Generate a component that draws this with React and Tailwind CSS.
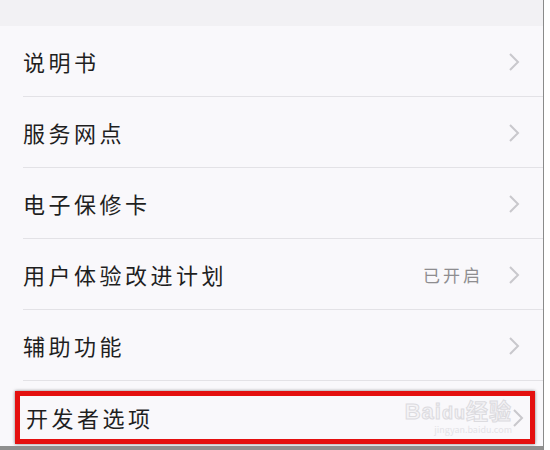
import React from "react";

const font = {
  fontFamily: '"Noto Sans CJK SC", "Noto Sans", sans-serif',
};

function Chevron() {
  return (
    <svg width="12" height="20" viewBox="0 0 12 20" className="shrink-0">
      <polyline
        points="2,2 10,10 2,18"
        fill="none"
        stroke="#c9c8cc"
        strokeWidth="2"
      />
    </svg>
  );
}

function Row({ label, value, last }) {
  return (
    <div className="relative h-[71px] flex items-center pl-[23px] pr-[23px]">
      <span className="text-[22px] text-[#1f1f1f] tracking-[3.5px]">{label}</span>
      <div className="ml-auto flex items-center gap-[25px]">
        {value && (
          <span className="text-[17px] text-[#8e8d90] tracking-[3px]">
            {value}
          </span>
        )}
        <Chevron />
      </div>
      {!last && (
        <div className="absolute bottom-0 left-[23px] right-0 h-px bg-[#e3e2e6]" />
      )}
    </div>
  );
}

export default function App() {
  const rows = [
    { label: "说明书" },
    { label: "服务网点" },
    { label: "电子保修卡" },
    { label: "用户体验改进计划", value: "已开启" },
    { label: "辅助功能" },
  ];

  return (
    <div className="w-[550px] h-[450px] flex bg-white overflow-hidden" style={font}>
      <div className="w-[544px] flex flex-col bg-[#f9f8fb] border-r border-[#8a8a8a]">
        <div className="h-[26px] bg-[#f2f1f4] shrink-0" />
        {rows.map((r) => (
          <Row key={r.label} label={r.label} value={r.value} />
        ))}
        <div className="relative flex-1 flex flex-col">
          <div className="mt-[10px] ml-[15px] w-[520px] h-[53px] border-[5px] border-[#e4100f] shadow-[0_0_3px_rgba(0,0,0,0.5)] flex items-center pl-[6px] pr-[6px]">
            <span className="text-[22px] text-[#1f1f1f] tracking-[3.5px]">开发者选项</span>
            <div className="ml-auto flex items-center">
              <div className="flex flex-col items-end leading-none">
                <span
                  className="text-[22px] font-bold text-[#f4f3f6] tracking-[1px]"
                  style={{ fontFamily: '"Liberation Sans", "Noto Sans CJK SC", sans-serif', WebkitTextStroke: "1px #dcdbdf" }}
                >
                  Bai<span className="text-[18px]">du</span>经验
                </span>
                <span className="text-[9px] text-[#e4e3e7] mt-[2px]">jingyan.baidu.com</span>
              </div>
              <Chevron />
            </div>
          </div>
          <div className="mt-auto h-[4px] bg-[#8f8f8f]" />
        </div>
      </div>
    </div>
  );
}
